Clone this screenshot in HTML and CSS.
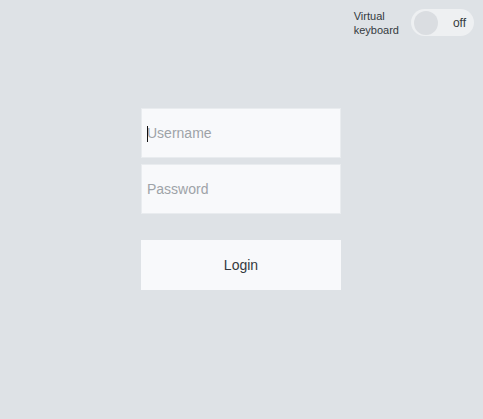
FILE: index.html
```html
<!DOCTYPE html>
<html>
<head>
<meta charset="utf-8">
<link rel="stylesheet" href="styles.css">
</head>
<body>
<div class="topbar">
  <span class="vk-label">Virtual<br>keyboard</span>
  <div class="toggle"><span class="knob"></span><span class="toggle-text">off</span></div>
</div>
<form class="login">
  <div class="field"><span class="caret"></span><input type="text" placeholder="Username"></div>
  <div class="field"><input type="password" placeholder="Password"></div>
  <button type="button" class="btn">Login</button>
</form>
</body>
</html>
```
FILE: styles.css
```css
html, body { margin: 0; padding: 0; }
body {
  background: #dee2e6;
  width: 483px;
  height: 419px;
  font-family: "Liberation Sans", Arial, sans-serif;
  color: #343a40;
  overflow: hidden;
}
.topbar {
  display: flex;
  justify-content: flex-end;
  align-items: center;
  gap: 12px;
  padding: 9px 9px 0 0;
  height: 27px;
}
.vk-label {
  font-size: 11px;
  line-height: 14px;
  color: #343a40;
}
.toggle {
  width: 63px;
  height: 27px;
  border-radius: 14px;
  background: #eef0f2;
  display: flex;
  align-items: center;
  box-sizing: border-box;
  padding: 0 8px 0 3px;
  justify-content: space-between;
}
.knob {
  width: 24px;
  height: 24px;
  border-radius: 50%;
  background: #dadde1;
}
.toggle-text { font-size: 12px; color: #343a40; }
.login {
  width: 200px;
  margin: 72px 0 0 141px;
  display: flex;
  flex-direction: column;
}
.field {
  position: relative;
  height: 50px;
  box-sizing: border-box;
  border: 1px solid #e9ecef;
  background: #f8f9fb;
  margin-bottom: 6px;
}
.field input {
  width: 100%;
  height: 100%;
  border: none;
  background: transparent;
  box-sizing: border-box;
  padding: 0 5px;
  font-family: inherit;
  font-size: 14px;
  color: #343a40;
  outline: none;
}
.field input::placeholder { color: #9ea3a8; }
.caret {
  position: absolute;
  left: 5px;
  top: 17px;
  width: 1px;
  height: 16px;
  background: #111;
}
.btn {
  margin-top: 20px;
  height: 50px;
  border: none;
  background: #f8f9fb;
  font-family: inherit;
  font-size: 14px;
  color: #343a40;
  padding: 0;
}
```
